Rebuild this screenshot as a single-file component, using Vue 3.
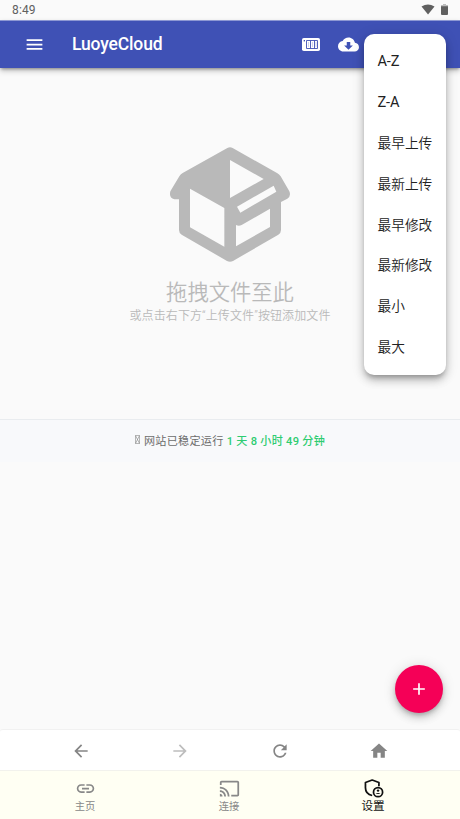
<script setup>
const sorts = ['A-Z', 'Z-A', '最早上传', '最新上传', '最早修改', '最新修改', '最小', '最大']
const uptime = '1 天 8 小时 49 分钟'
</script>

<template>
  <div class="screen">
    <header class="status">
      <span>8:49</span>
      <div class="status-icons">
        <svg width="14" height="11" viewBox="0 0 14 11"><path d="M.5 2.4Q7-1.6 13.5 2.4L7 10.6Z" fill="#606060" /></svg>
        <svg width="7" height="11" viewBox="0 0 7 11"><path d="M2 0h3v1h2v2H0V1h2Z" fill="#bdbdbd" /><path d="M0 2.3h7V10q0 1-1 1H1q-1 0-1-1Z" fill="#606060" /></svg>
      </div>
    </header>

    <nav class="appbar">
      <svg class="menu-icon" width="21" height="21" viewBox="0 0 24 24"><path d="M3 18h18v-2H3v2zm0-5h18v-2H3v2zm0-7v2h18V6H3z" fill="#fff" /></svg>
      <h1>LuoyeCloud</h1>
      <svg class="card-icon" width="18" height="13" viewBox="0 0 18 13">
        <rect width="18" height="13" rx="1.8" fill="#fff" />
        <path d="M4.5 2.5h11v8h-11zM8.5 2.5v8M12.5 2.5v8" fill="none" stroke="#3f51b5" stroke-width=".9" />
        <path d="M6.5 4v5M10.5 4v5M14 4v5" fill="none" stroke="#3f51b5" stroke-width=".5" opacity=".5" />
        <rect x="1.7" y="2" width="1.3" height="1.4" fill="#3f51b5" />
      </svg>
      <svg class="cloud-icon" width="21" height="21" viewBox="0 0 24 24"><path d="M19.35 10.04C18.67 6.59 15.64 4 12 4 9.11 4 6.6 5.64 5.35 8.04 2.34 8.36 0 10.91 0 14c0 3.31 2.69 6 6 6h13c2.76 0 5-2.24 5-5 0-2.64-2.05-4.78-4.65-4.96zM17 13l-5 5-5-5h3V9h4v4h3z" fill="#fff" /></svg>
    </nav>

    <main>
      <section class="empty">
        <svg class="box-icon" width="140" height="130" viewBox="0 0 420 390">
          <path fill="#b9b9b9" fill-rule="evenodd" d="M202 24Q210 20 218 24L351 99Q358 103 362 109L388 154Q394 168 382 176L363 186V270Q363 279 355 284L219 363Q210 368 201 363L65 284Q57 279 57 270V178H43Q26 173 31 154L58 109Q61 103 68 99ZM210 60V174L311 117ZM90 146V262L193 320V204ZM231 200L341 137L349 155L241 218ZM228 255V319L330 261V206L245 255Q236 260 228 255Z" />
        </svg>
        <h2>拖拽文件至此</h2>
        <p>或点击右下方“上传文件”按钮添加文件</p>
      </section>
      <footer class="uptime">
        <svg width="5" height="9" viewBox="0 0 5 9"><path d="M.5.5h4v8h-4zM.5.5l4 8M4.5.5l-4 8" fill="none" stroke="#888" stroke-width=".6" /></svg>
        <span>网站已稳定运行 <b>{{ uptime }}</b></span>
      </footer>
    </main>

    <div class="browser-bar">
      <svg width="20" height="20" viewBox="0 0 24 24"><path d="M20 11H7.83l5.59-5.59L12 4l-8 8 8 8 1.41-1.41L7.83 13H20v-2z" fill="#858585" /></svg>
      <svg width="20" height="20" viewBox="0 0 24 24"><path d="M12 4l-1.41 1.41L16.17 11H4v2h12.17l-5.58 5.59L12 20l8-8z" fill="#bdbdbd" /></svg>
      <svg width="20" height="20" viewBox="0 0 24 24"><path d="M17.65 6.35C16.2 4.9 14.21 4 12 4c-4.42 0-7.99 3.58-7.99 8s3.57 8 7.99 8c3.73 0 6.84-2.55 7.73-6h-2.08c-.82 2.33-3.04 4-5.65 4-3.31 0-6-2.69-6-6s2.69-6 6-6c1.66 0 3.14.69 4.22 1.78L13 11h7V4l-2.35 2.35z" fill="#858585" /></svg>
      <svg width="20" height="20" viewBox="0 0 24 24"><path d="M10 20v-6h4v6h5v-8h3L12 3 2 12h3v8z" fill="#858585" /></svg>
    </div>

    <div class="tabs">
      <div class="tab">
        <svg width="21" height="21" viewBox="0 0 24 24"><path d="M3.9 12c0-1.71 1.39-3.1 3.1-3.1h4V7H7c-2.76 0-5 2.24-5 5s2.24 5 5 5h4v-1.9H7c-1.71 0-3.1-1.39-3.1-3.1zM8 13h8v-2H8v2zm9-6h-4v1.9h4c1.71 0 3.1 1.39 3.1 3.1s-1.39 3.1-3.1 3.1h-4V17h4c2.76 0 5-2.24 5-5s-2.24-5-5-5z" fill="#888" /></svg>
        <span>主页</span>
      </div>
      <div class="tab">
        <svg width="21" height="21" viewBox="0 0 24 24"><path d="M21 3H3c-1.1 0-2 .9-2 2v3h2V5h18v14h-7v2h7c1.1 0 2-.9 2-2V5c0-1.1-.9-2-2-2zM1 18v3h3c0-1.66-1.34-3-3-3zm0-4v2c2.76 0 5 2.24 5 5h2c0-3.87-3.13-7-7-7zm0-4v2c4.97 0 9 4.03 9 9h2c0-6.08-4.93-11-11-11z" fill="#888" /></svg>
        <span>连接</span>
      </div>
      <div class="tab active">
        <svg width="21" height="21" viewBox="0 0 24 24">
          <path d="M18.2 9.5V5.2L10.5 2.3 2.8 5.2V11c0 4.6 3.1 8 7.7 9" fill="none" stroke="#111" stroke-width="2" stroke-linejoin="round" />
          <circle cx="17.2" cy="16.2" r="5.2" fill="#fffff3" stroke="#111" stroke-width="2" />
          <circle cx="17.2" cy="14.4" r="1.4" fill="#111" /><path d="M14.4 18.4q2.8-2.8 5.6 0z" fill="#111" />
        </svg>
        <span>设置</span>
      </div>
    </div>

    <ul class="sort-menu">
      <li v-for="item in sorts" :key="item" :class="{ latin: item.includes('-') }">{{ item }}</li>
    </ul>
    <button class="fab" aria-label="+">
      <svg width="20" height="20" viewBox="0 0 24 24"><path d="M19 13h-6v6h-2v-6H5v-2h6V5h2v6h6v2z" fill="#fff" /></svg>
    </button>
  </div>
</template>

<style>
body { margin: 0; }
</style>

<style scoped>
.screen {
  position: relative;
  display: flex;
  flex-direction: column;
  height: 819px;
  width: 460px;
  overflow: hidden;
  background: #fafafa;
  font-family: Roboto, "Noto Sans CJK SC", sans-serif;
}
.screen * { box-sizing: border-box; }
svg { display: block; flex: none; }
.status {
  display: flex;
  justify-content: space-between;
  height: 20px;
  padding: 3px 12px 0;
  font-size: 12px;
  line-height: 15px;
  letter-spacing: .15px;
  color: #606060;
}
.status-icons { display: flex; gap: 6px; padding-top: 1px; }
.appbar {
  display: flex;
  align-items: center;
  height: 48px;
  padding-left: 24px;
  border-top: 1px solid #8d98d3;
  background: #3f51b5;
  box-shadow: 0 2px 3px -1px rgba(0,0,0,.35), 0 3px 6px rgba(0,0,0,.2);
}
h1 {
  width: 229px;
  margin: 0 0 2px 27px;
  font-size: 17.5px;
  font-weight: 500;
  line-height: 24px;
  letter-spacing: -.15px;
  color: #fff;
}
.card-icon { margin-left: 1px; }
.cloud-icon { margin-left: 18px; }
main { flex: 1; }
.empty {
  display: flex;
  flex-direction: column;
  align-items: center;
  height: 351px;
  padding-top: 72px;
  color: #b9b9b9;
}
h2 {
  margin: 8px 0 0;
  font-size: 21.3px;
  font-weight: 350;
  line-height: 30px;
}
.empty p { margin: -1px 0 0; font-size: 12px; font-weight: 350; line-height: 18px; white-space: nowrap; letter-spacing: .1px; }
.uptime {
  display: flex;
  align-items: center;
  justify-content: center;
  gap: 4px;
  height: 43px;
  padding-bottom: 3px;
  border-top: 1px solid #e9ecef;
  background: #f8f9fb;
  font-size: 11.1px;
  letter-spacing: .28px;
  color: #6c6c6c;
}
.uptime b { font-weight: 500; color: #2ecc71; }
.browser-bar {
  display: grid;
  grid-template-columns: repeat(4, 1fr);
  justify-items: center;
  align-items: center;
  height: 41px;
  padding: 1px 31px 0;
  border-top: 1px solid #f1f1f1;
  border-radius: 3px 3px 0 0;
  background: #fff;
}
.tabs {
  display: grid;
  grid-template-columns: repeat(3, 144px);
  height: 49px;
  padding-left: 13px;
  border-top: 1px solid #f2f2ed;
  background: #fffff3;
}
.tab {
  display: flex;
  flex-direction: column;
  align-items: center;
  padding-top: 7px;
  font-size: 10.3px;
  line-height: 15px;
  color: #888;
}
.tab.active { font-size: 11.6px; color: #111; }
.sort-menu {
  position: absolute;
  top: 34px;
  left: 364px;
  width: 82px;
  height: 341px;
  margin: 0;
  padding: 7px 0;
  border-radius: 10px;
  background: #fff;
  box-shadow: 0 4px 5px -2px rgba(0,0,0,.25), 0 6px 9px rgba(0,0,0,.17), 0 2px 14px rgba(0,0,0,.14);
  list-style: none;
}
.sort-menu li {
  height: 40.9px;
  padding-left: 13.5px;
  font-size: 13.7px;
  font-weight: 350;
  line-height: 40.9px;
  color: #222;
  white-space: nowrap;
}
.sort-menu .latin { font-size: 14.6px; font-weight: 400; letter-spacing: -.15px; }
.fab {
  position: absolute;
  left: 395px;
  top: 665px;
  display: grid;
  place-items: center;
  width: 48px;
  height: 48px;
  padding: 0;
  border: 0;
  border-radius: 50%;
  background: #f50057;
  box-shadow: 0 3px 4px -1px rgba(0,0,0,.2), 0 5px 8px rgba(0,0,0,.14), 0 1px 14px rgba(0,0,0,.12);
}
</style>
